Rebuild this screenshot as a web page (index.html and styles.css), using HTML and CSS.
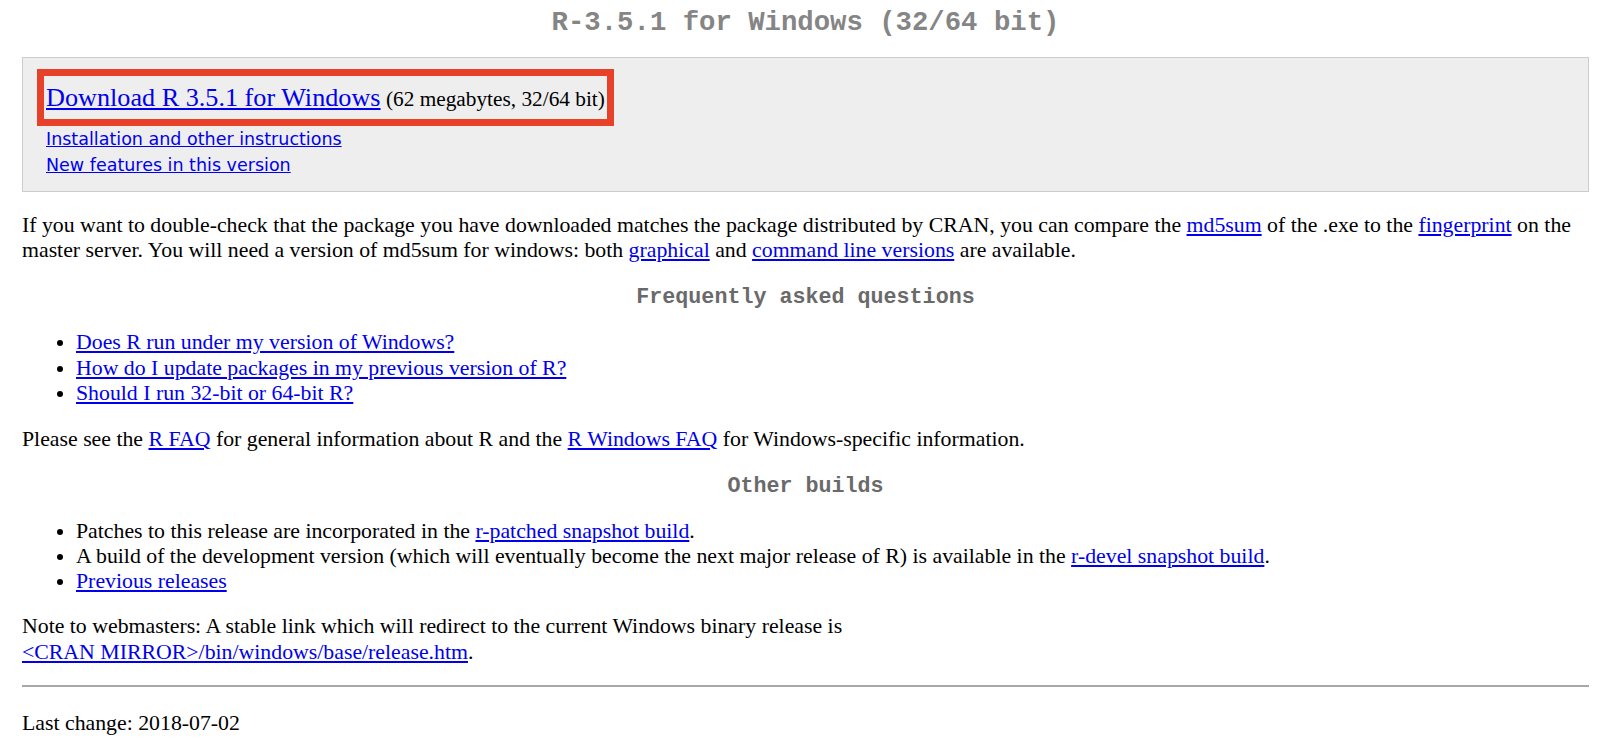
FILE: index.html
```html
<!DOCTYPE html>
<html lang="en">
<head>
<meta charset="utf-8">
<title>Download R-3.5.1 for Windows</title>
<link rel="stylesheet" href="styles.css">
</head>
<body>
<h1 class="title">R-3.5.1 for Windows (32/64 bit)</h1>

<div class="dlbox">
  <div class="dl-main"><a href="#" class="dl-link">Download R 3.5.1 for Windows</a> <span class="dl-size">(62 megabytes, 32/64 bit)</span></div>
  <div class="side-links">
    <a href="#">Installation and other instructions</a><br>
    <a href="#">New features in this version</a>
  </div>
</div>

<p class="intro">If you want to double-check that the package you have downloaded matches the package distributed by CRAN, you can compare the <a href="#">md5sum</a> of the .exe to the <a href="#">fingerprint</a> on the master server. You will need a version of md5sum for windows: both <a href="#">graphical</a> and <a href="#">command line versions</a> are available.</p>

<h2 class="section">Frequently asked questions</h2>
<ul class="list">
  <li><a href="#">Does R run under my version of Windows?</a></li>
  <li><a href="#">How do I update packages in my previous version of R?</a></li>
  <li><a href="#">Should I run 32-bit or 64-bit R?</a></li>
</ul>

<p class="para">Please see the <a href="#">R FAQ</a> for general information about R and the <a href="#">R Windows FAQ</a> for Windows-specific information.</p>

<h2 class="section section-2">Other builds</h2>
<ul class="list">
  <li>Patches to this release are incorporated in the <a href="#">r-patched snapshot build</a>.</li>
  <li>A build of the development version (which will eventually become the next major release of R) is available in the <a href="#">r-devel snapshot build</a>.</li>
  <li><a href="#">Previous releases</a></li>
</ul>

<p class="para note">Note to webmasters: A stable link which will redirect to the current Windows binary release is<br><a href="#">&lt;CRAN MIRROR&gt;/bin/windows/base/release.htm</a>.</p>

<hr class="rule">

<p class="last">Last change: 2018-07-02</p>
</body>
</html>
```

FILE: styles.css
```css
html {
  background: #ffffff;
}

body {
  margin: 0 11px 0 22px;
  font-family: "Liberation Serif", "Times New Roman", serif;
  font-size: 21.8px;
  line-height: 25.3px;
  color: #000000;
}

a {
  color: #0000ee;
  text-decoration: underline;
}

.title {
  margin: 8px 0 19px;
  font-family: "Liberation Mono", "Courier New", monospace;
  font-size: 27.3px;
  line-height: 30px;
  font-weight: bold;
  color: #858585;
  text-align: center;
}

.dlbox {
  background: #eeeeee;
  border: 1px solid #cccccc;
  padding: 25px 22px 12px 23px;
}

.dl-main {
  width: fit-content;
  line-height: 30px;
  padding: 7px 2px 5px 2px;
  margin: -7px 0 -5px -2px;
  outline: 7px solid #e8412a;
}

.dl-link {
  font-size: 26.2px;
}

.dl-size {
  font-size: 21.3px;
}

.side-links {
  margin-top: 11.8px;
  font-family: "DejaVu Sans", Verdana, sans-serif;
  font-size: 17.5px;
  line-height: 26.5px;
}

.intro {
  margin: 21px 0 0;
}

.section {
  margin: 22px 0 0;
  font-family: "Liberation Mono", "Courier New", monospace;
  font-size: 21.7px;
  line-height: 25px;
  font-weight: bold;
  color: #6a6a6a;
  text-align: center;
}

.section-2 {
  margin-top: 21px;
}

.list {
  margin: 20px 0 0;
  padding-left: 54px;
}

.para {
  margin: 21px 0 0;
}

.note {
  margin-top: 20px;
}

.rule {
  margin: 20px 0 0;
  height: 0;
  border: 0;
  border-top: 2px solid #a8a8a8;
}

.last {
  margin: 23.5px 0 0;
}
```
